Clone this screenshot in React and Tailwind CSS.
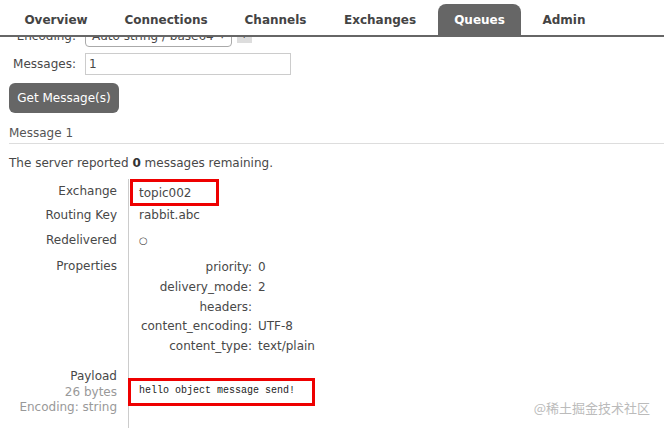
import React from "react";

const tabs = [
  ["Overview", "w-[94px]"],
  ["Connections", "w-[114px]"],
  ["Channels", "w-[93px]"],
  ["Exchanges", "w-[104px]"],
  ["Queues", "w-[83px]"],
  ["Admin", "w-[74px]"],
];

const props = [
  ["priority:", "0", "h-[20px]"],
  ["delivery_mode:", "2", "h-[20px]"],
  ["headers:", "", "h-[20px]"],
  ["content_encoding:", "UTF-8", "h-[18px]"],
  ["content_type:", "text/plain", "h-[22px]"],
];

const Row = ({ label, children, labelClass = "", valueClass = "" }) => (
  <>
    <div className={`text-right pr-[11px] ${labelClass}`}>{label}</div>
    <div className={`border-l border-[#ccc] pl-[10px] ${valueClass}`}>{children}</div>
  </>
);

export default function App() {
  return (
    <div
      className="relative w-[664px] h-[429px] overflow-hidden bg-white text-[12px] text-[#484848]"
      style={{ fontFamily: '"DejaVu Sans", Verdana, sans-serif' }}
    >
      {/* tab bar */}
      <div className="h-[37px] flex items-end gap-[6px] pl-[9px] border-b-2 border-[#666]">
        {tabs.map(([t, w]) => (
          <div
            key={t}
            className={`${w} h-[31px] flex items-center justify-center text-[12px] font-bold rounded-t-lg ${
              t === "Queues" ? "bg-[#666] text-white" : "text-[#444]"
            }`}
          >
            {t}
          </div>
        ))}
      </div>

      {/* encoding row, scrolled under the tab bar */}
      <div className="h-[10px] overflow-hidden flex items-end">
        <div className="flex items-center pl-[9px] h-[22px]">
          <div className="w-[76px] text-right pr-[9px]">Encoding:</div>
          <div className="w-[147px] h-[22px] border border-[#aaa] rounded-sm flex items-center pl-[6px] pr-[6px] justify-between overflow-hidden whitespace-nowrap">
            <span>Auto string / base64</span>
            <span className="text-[7px] ml-1">▼</span>
          </div>
          <div className="ml-[5px] w-[15px] h-[14px] bg-[#ddd] text-[9px] text-center">?</div>
        </div>
      </div>

      {/* messages */}
      <div className="flex items-center pl-[9px] mt-[6px]">
        <div className="w-[76px] text-right pr-[9px]">Messages:</div>
        <div className="w-[206px] h-[22px] border border-[#ccc] px-[3px] flex items-center">1</div>
      </div>

      <div className="pl-[9px] mt-[8px]">
        <div className="w-[110px] h-[30px] rounded-md bg-[#666] text-white text-[12px] flex items-center justify-center">
          Get Message(s)
        </div>
      </div>

      <div className="ml-[9px] mt-[10px] border-b border-[#ddd] text-[#555] leading-[20px]">
        Message 1
      </div>

      <div className="pl-[9px] mt-[11px] leading-[16px]">
        The server reported <b className="font-bold text-[#333]">0</b> messages remaining.
      </div>

      <div className="grid grid-cols-[119px_1fr] ml-[9px] mt-[8px] leading-[18px]">
        <Row label="Exchange" labelClass="pt-[3px]">
          <div className="-ml-[9px] w-[89px] h-[27px] border-[3px] border-[#e00] pl-[6px] flex items-center">
            topic002
          </div>
        </Row>
        <Row label="Routing Key" labelClass="pb-[7px]">
          rabbit.abc
        </Row>
        <Row label="Redelivered" labelClass="pb-[8px]">
          <span className="text-[10px]">○</span>
        </Row>
        <Row label="Properties">
          <div className="grid grid-cols-[119px_1fr]">
            {props.map(([k, v, h]) => (
              <React.Fragment key={k}>
                <div className={`${h} flex items-center justify-end pr-[6px] whitespace-nowrap`}>{k}</div>
                <div className={`${h} flex items-center`}>{v}</div>
              </React.Fragment>
            ))}
          </div>
        </Row>
        <div className="text-right pr-[11px] pt-[12px] pb-[12px] leading-[15.5px]">
          <div>Payload</div>
          <div className="text-[#999]">26 bytes</div>
          <div className="text-[#999]">Encoding: string</div>
        </div>
        <div className="border-l border-[#ccc] pl-[10px] pt-[21px]">
          <div
            className="-ml-[11px] w-[187px] h-[28px] border-[3px] border-[#e00] pl-[8px] pt-[3px] text-[10px] leading-[14px] text-[#222]"
            style={{ fontFamily: '"Liberation Mono", monospace' }}
          >
            hello object message send!
          </div>
        </div>
      </div>

      {/* watermark */}
      <div
        className="absolute right-[14px] bottom-[12px] text-[13px] text-[#bbb]"
        style={{ fontFamily: '"Noto Sans CJK SC", sans-serif' }}
      >
        @稀土掘金技术社区
      </div>
    </div>
  );
}
